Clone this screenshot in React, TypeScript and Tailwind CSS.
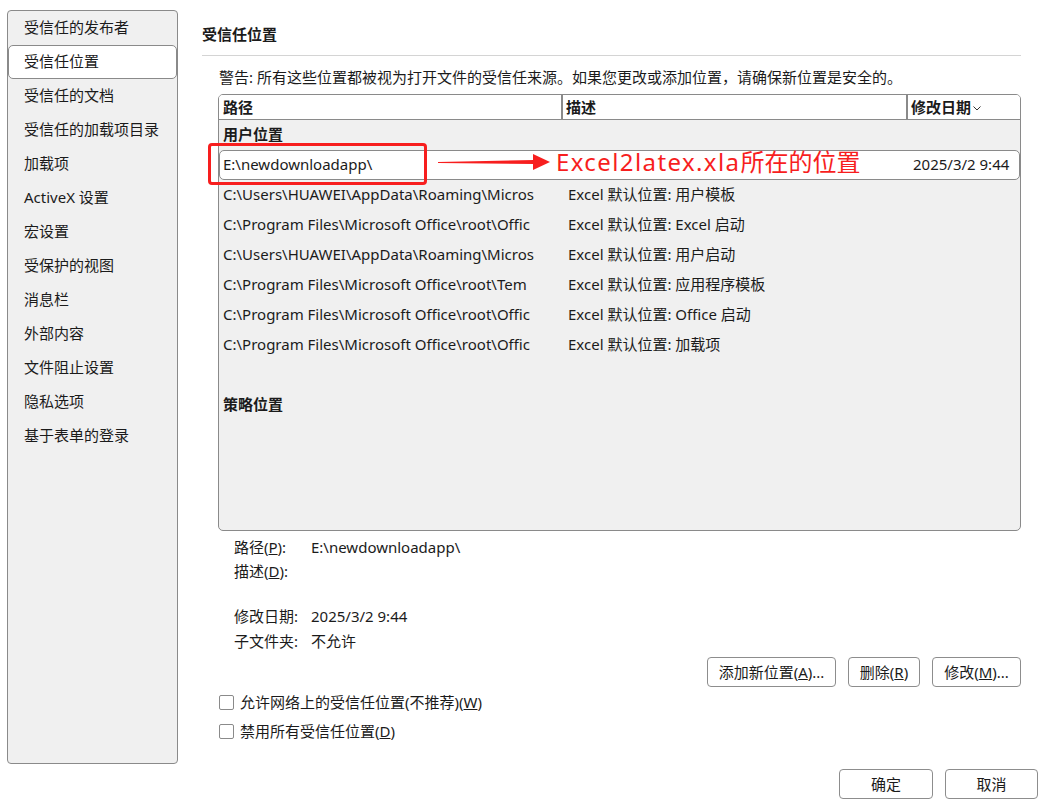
import React from "react";

const FONT = "font-['Noto_Sans','Noto_Sans_CJK_SC',sans-serif]";

const navItems = [
  "受信任的发布者",
  "受信任位置",
  "受信任的文档",
  "受信任的加载项目录",
  "加载项",
  "ActiveX 设置",
  "宏设置",
  "受保护的视图",
  "消息栏",
  "外部内容",
  "文件阻止设置",
  "隐私选项",
  "基于表单的登录",
];

const rows = [
  ["C:\\Users\\HUAWEI\\AppData\\Roaming\\Micros", "Excel 默认位置: 用户模板"],
  ["C:\\Program Files\\Microsoft Office\\root\\Offic", "Excel 默认位置: Excel 启动"],
  ["C:\\Users\\HUAWEI\\AppData\\Roaming\\Micros", "Excel 默认位置: 用户启动"],
  ["C:\\Program Files\\Microsoft Office\\root\\Tem", "Excel 默认位置: 应用程序模板"],
  ["C:\\Program Files\\Microsoft Office\\root\\Offic", "Excel 默认位置: Office 启动"],
  ["C:\\Program Files\\Microsoft Office\\root\\Offic", "Excel 默认位置: 加载项"],
];

function Btn({ children, w }: { children: React.ReactNode; w: string }) {
  return (
    <button
      className={`${w} h-[30px] flex items-center justify-center rounded-[4px] border border-[#8d8d8d] bg-white text-[15px] text-[#1b1b1b]`}
    >
      {children}
    </button>
  );
}

function Check({ children }: { children: React.ReactNode }) {
  return (
    <div className="flex items-center h-[24px] pl-[17px]">
      <span className="w-[15px] h-[15px] rounded-[2px] border border-[#8a8a8a] bg-white" />
      <span className="ml-[6px] text-[15px] leading-[20px]">{children}</span>
    </div>
  );
}

export default function App() {
  return (
    <div className={`${FONT} relative w-[1044px] h-[809px] bg-white text-[#1b1b1b] overflow-hidden`}>
      <div className="flex pl-[7px] pt-[10px]">
        {/* Sidebar */}
        <div className="w-[171px] h-[754px] rounded-[4px] border border-[#8a8a8a] bg-[#f0f0f0] flex flex-col">
          {navItems.map((t, i) => (
            <div
              key={t}
              className={
                i === 1
                  ? "h-[34px] flex items-center pl-[15px] pb-[1px] rounded-[5px] border border-[#8a8a8a] bg-white text-[15px]"
                  : "h-[34px] flex items-center pl-[16px] pb-[1px] text-[15px]"
              }
            >
              {t}
            </div>
          ))}
        </div>

        {/* Right content */}
        <div className="ml-[24px] w-[819px] flex flex-col">
          <div className="mt-[14px] h-[32px] border-b border-[#d4d4d4] text-[15px] font-bold leading-[20px]">
            受信任位置
          </div>
          <div className="mt-[11px] ml-[17px] text-[15px] leading-[20px]">
            警告: 所有这些位置都被视为打开文件的受信任来源。如果您更改或添加位置，请确保新位置是安全的。
          </div>

          {/* Table */}
          <div className="mt-[7px] ml-[16px] w-[803px] h-[437px] rounded-[5px] border border-[#8a8a8a] bg-[#f0f0f0] flex flex-col overflow-hidden">
            <div className="h-[25px] flex bg-white border-b border-[#8a8a8a] text-[15px] font-bold">
              <div className="w-[344px] pl-[4px] flex items-center border-r-2 border-[#8a8a8a]">路径</div>
              <div className="w-[345px] pl-[3px] flex items-center border-r-2 border-[#8a8a8a]">描述</div>
              <div className="flex-1 pl-[3px] flex items-center">
                修改日期
                <svg width="8" height="5" viewBox="0 0 8 5" className="ml-[2px] mt-[3px]">
                  <path d="M0.5 0.5 L4 4 L7.5 0.5" fill="none" stroke="#333" strokeWidth="1" />
                </svg>
              </div>
            </div>
            <div className="h-[30px] flex items-center pl-[4px] pb-[2px] text-[15px] font-bold">用户位置</div>
            <div className="h-[30px] flex items-center pb-[1px] rounded-[5px] border border-[#8a8a8a] bg-white text-[15px]">
              <div className="w-[344px] pl-[3px] whitespace-nowrap">E:\newdownloadapp\</div>
              <div className="w-[349px]" />
              <div className="flex-1 whitespace-nowrap">2025/3/2 9:44</div>
            </div>
            {rows.map(([p, d], i) => (
              <div key={i} className="h-[30px] flex items-center pb-[2px] text-[15px]">
                <div className="w-[345px] pl-[4px] whitespace-nowrap">{p}</div>
                <div className="pl-[4px] whitespace-nowrap">{d}</div>
              </div>
            ))}
            <div className="h-[30px]" />
            <div className="h-[30px] flex items-center pl-[4px] pb-[2px] text-[15px] font-bold">策略位置</div>
          </div>

          {/* Details */}
          <div className="mt-[4px] ml-[32px] text-[15px]">
            <div className="h-[24px] flex items-center">
              <span className="w-[77px]">
                路径(<span className="underline">P</span>):
              </span>
              <span>E:\newdownloadapp\</span>
            </div>
            <div className="h-[24px] flex items-center">
              <span className="w-[77px]">
                描述(<span className="underline">D</span>):
              </span>
            </div>
            <div className="mt-[21px] h-[24px] flex items-center">
              <span className="w-[77px]">修改日期:</span>
              <span>2025/3/2 9:44</span>
            </div>
            <div className="mt-[1px] h-[24px] flex items-center">
              <span className="w-[77px]">子文件夹:</span>
              <span>不允许</span>
            </div>
          </div>

          <div className="mt-[4px] flex justify-end gap-[12px]">
            <Btn w="w-[129px]">
              添加新位置(<span className="underline">A</span>)...
            </Btn>
            <Btn w="w-[72px]">
              删除(<span className="underline">R</span>)
            </Btn>
            <Btn w="w-[89px]">
              修改(<span className="underline">M</span>)...
            </Btn>
          </div>

          <div className="mt-[3px] flex flex-col gap-[5px]">
            <Check>
              允许网络上的受信任位置(不推荐)(<span className="underline">W</span>)
            </Check>
            <Check>
              禁用所有受信任位置(<span className="underline">D</span>)
            </Check>
          </div>
        </div>
      </div>

      {/* Footer */}
      <div className="mt-[5px] flex justify-end gap-[12px] pr-[6px]">
        <Btn w="w-[94px]">确定</Btn>
        <Btn w="w-[93px]">取消</Btn>
      </div>

      {/* Annotation overlay */}
      <div className="absolute left-[208px] top-[143px] w-[219px] h-[42px] rounded-[4px] border-[3px] border-[#f71e1e]" />
      <svg className="absolute left-[436px] top-[150px]" width="116" height="26" viewBox="0 0 116 26">
        <polygon points="2,12 98,10 98,14 2,13" fill="#f71e1e" />
        <polygon points="97,4 114,12 97,20" fill="#f71e1e" />
      </svg>
      <div className="absolute left-[556px] top-[145px] text-[24px] leading-[34px] text-[#f71e1e] whitespace-nowrap">
        <span className="tracking-[1.4px]">Excel2latex.xla</span>所在的位置
      </div>
    </div>
  );
}
